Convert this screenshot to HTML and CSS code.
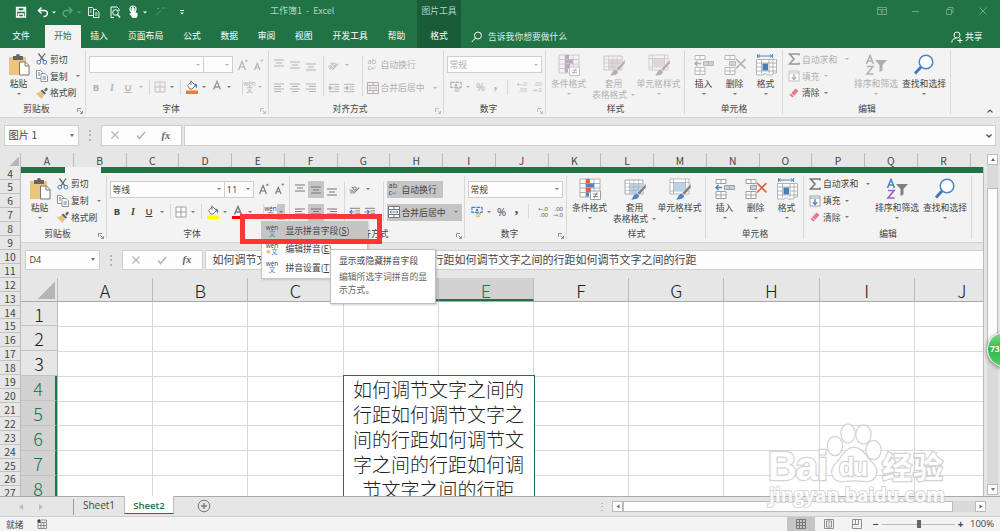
FILE: index.html
```html
<!DOCTYPE html>
<html lang="zh-CN">
<head>
  <meta charset="UTF-8">
  <meta name="viewport" content="width=device-width, initial-scale=1.0">
  <title>工作簿1 - Excel</title>
  <link rel="stylesheet" href="styles.css">
</head>
<body>
  <!-- icon set shared by both ribbons -->
  <svg class="defs">
    <symbol id="paste" viewBox="0 0 22 22"><path d="M1 3h17v18H1z" fill="#ecc47c"/><path d="M5 2h3a2 2 0 0 1 4 0h3v4H5z" fill="#666"/><path d="M11.500 8h6l3.500 3.500V21h-9.500z" fill="#fff" stroke="#777"/><path d="M17 8v4h4" fill="none" stroke="#777"/></symbol>
    <symbol id="cut" viewBox="0 0 12 12"><path d="M2.500 0.500 8 8M9 0.500 3.800 8" stroke="#666" stroke-width="1.300" fill="none"/><circle cx="2.800" cy="9.200" r="1.900" fill="none" stroke="#4a7ebb"/><circle cx="8.900" cy="9.200" r="1.900" fill="none" stroke="#4a7ebb"/></symbol>
    <symbol id="copy" viewBox="0 0 12 12"><path d="M.5.500h4l2 2v6h-6z" fill="#fff" stroke="#888" stroke-width=".9"/><path d="M5 3.500h4l2.500 2.500v5.500H5z" fill="#fff" stroke="#888" stroke-width=".9"/><path d="M2 3h2M2 5h2M6.500 7h3.500M6.500 9h3.500" stroke="#4a7ebb"/></symbol>
    <symbol id="brush" viewBox="0 0 12 12"><path d="M0 6.500 4.500 4.500 8 8l-2.500 4z" fill="#ecc07c"/><path d="M4.500 4 6.300 2.500 10 6.200 8.500 7.800zM8 3 10.300.5 12 2 9.800 4.800z" fill="#666"/></symbol>
    <symbol id="grow" viewBox="0 0 12 12"><path d="M1.500 11 5 2.500 8.500 11M2.700 8h4.600" fill="none" stroke="currentColor" stroke-width="1.200"/><path d="M7.500 2.500 9.300.5l1.800 2z" fill="var(--blue)"/></symbol>
    <symbol id="shrink" viewBox="0 0 12 12"><path d="M1.500 11 4.300 4.500 7.100 11M2.500 8.800h3.600" fill="none" stroke="currentColor" stroke-width="1.100"/><path d="M7 .8h3.600L8.800 2.800z" fill="var(--blue)"/></symbol>
    <symbol id="borders" viewBox="0 0 12 12"><path d="M1 1h10v10H1zM6 1v10M1 6h10" fill="var(--fill)" stroke="var(--line)"/></symbol>
    <symbol id="bucket" viewBox="0 0 14 14"><path d="M2.500 5.500 6.500 1.500l4 4-3.500 3.500H5z" fill="#fff" stroke="#777"/><path d="M6 5V.500" stroke="#777"/><path d="M9.500 3.500c3 .5 3 2 2.500 5-1-1-1-2-2.500-3z" fill="#4a7ebb"/><path d="M1 10.500h12V14H1z" fill="var(--bucket)"/></symbol>
    <symbol id="color" viewBox="0 0 14 14"><path d="M3.500 9.500 7 1.500l3.500 8M4.700 7h4.600" fill="none" stroke="currentColor" stroke-width="1.400"/><path d="M1 11h12v3H1z" fill="var(--bar)"/></symbol>
    <symbol id="top" viewBox="0 0 12 12"><path d="M1 1.500h10M3 4.500h6M1 7.500h10" stroke="currentColor"/></symbol>
    <symbol id="middle" viewBox="0 0 12 12"><path d="M1 3.500h10M3 6.500h6M1 9.500h10" stroke="currentColor"/></symbol>
    <symbol id="bottom" viewBox="0 0 12 12"><path d="M1 5.500h10M3 8.500h6M1 11.500h10" stroke="currentColor"/></symbol>
    <symbol id="left" viewBox="0 0 12 12"><path d="M1 2.500h10M1 5h7M1 7.500h10M1 10h7" stroke="currentColor"/></symbol>
    <symbol id="center" viewBox="0 0 12 12"><path d="M1 2.500h10M3 5h6M1 7.500h10M3 10h6" stroke="currentColor"/></symbol>
    <symbol id="right" viewBox="0 0 12 12"><path d="M1 2.500h10M4 5h7M1 7.500h10M4 10h7" stroke="currentColor"/></symbol>
    <symbol id="outdent" viewBox="0 0 13 12"><path d="M1 2h11M7 4.700h5M7 7.300h5M1 10h11" stroke="currentColor"/><path d="M1 6h5M3.200 3.800 1 6l2.200 2.200" fill="none" stroke="var(--blue)" stroke-width="1.300"/></symbol>
    <symbol id="indent" viewBox="0 0 13 12"><path d="M1 2h11M7 4.700h5M7 7.300h5M1 10h11" stroke="currentColor"/><path d="M.5 6h5M3.500 3.800 5.700 6 3.500 8.200" fill="none" stroke="var(--blue)" stroke-width="1.300"/></symbol>
    <symbol id="merge" viewBox="0 0 12 12"><path d="M.5.500h11v11H.500zM.5 3.500h11M.5 8.500h11M6 .5v3M6 8.500v3" fill="var(--fill)" stroke="currentColor"/><path d="M2 6h8M3.500 4.800 2 6l1.500 1.200M8.500 4.800 10 6 8.500 7.200" fill="none" stroke="var(--blue)" stroke-width=".9"/></symbol>
    <symbol id="money" viewBox="0 0 13 12"><path d="M1 1h11v5.500H1z" fill="none" stroke="var(--blue)" stroke-width="1.300" stroke-dasharray="4 1"/><circle cx="6.500" cy="3.800" r="1.400" fill="var(--blue)"/><path d="M5 8h6M5 10.500h5" stroke="var(--gold)" stroke-width="1.800"/></symbol>
    <symbol id="cond" viewBox="0 0 22 22"><path d="M1 1h20v18H1zM1 5.500h20M1 10h20M1 14.500h20M7 1v18M15 1v18" fill="var(--fill)" stroke="var(--line)" stroke-width=".8"/><path d="M7 1h4v4H7zM7 10h5v4H7z" fill="var(--red)"/><path d="M7 5.500h8v4H7zM7 14.500h3v4H7z" fill="var(--blue)"/><path d="M11.500 13h10v8.500h-10z" fill="#fff" stroke="var(--line)"/><path d="M14 16.200h5M14 18.500h5M18 14.500l-3 5.500" stroke="currentColor" fill="none" stroke-width=".9"/></symbol>
    <symbol id="table" viewBox="0 0 22 22"><path d="M1 2h18v14H1z" fill="var(--fill)" stroke="var(--line)" stroke-width=".9"/><path d="M5.500 5.500h13V16h-13z" fill="var(--tint)"/><path d="M1 5.500h18M1 9h18M1 12.500h18M5.500 2v14M10 2v14M14.500 2v14" stroke="var(--line)" stroke-width=".5"/><path d="M22 5.500v4l-6.500 7.500-2.500-2z" fill="var(--dark)" stroke="#f3f3f3" stroke-width=".6"/><path d="M12.500 15.500l2.500 2c0 3-3 4-8 4 2-1 2-5 5.500-6z" fill="var(--blue)"/></symbol>
    <symbol id="cell" viewBox="0 0 22 22"><path d="M1 1h19v15H1zM1 4.500h19M1 13h19M4.500 1v15M16.500 1v15" fill="var(--fill)" stroke="var(--line)" stroke-width=".7"/><path d="M5 5h11v8H5z" fill="var(--tint)"/><path d="M22 5.500v4l-6.500 7.500-2.500-2z" fill="var(--dark)" stroke="#f3f3f3" stroke-width=".6"/><path d="M12.500 15.500l2.500 2c0 3-3 4-8 4 2-1 2-5 5.500-6z" fill="var(--blue)"/></symbol>
    <symbol id="insert" viewBox="0 0 22 22"><path d="M2 1.500h10v4H2zM7 1.500v4M2 13.500h10v7H2zM7 13.500v7M2 17h10" fill="#fff" stroke="var(--line)"/><path d="M10.500 7.500h10v4h-10zM15.500 7.500v4" fill="var(--tint)" stroke="var(--line)"/><path d="M2 9.500h6M4.500 7 2 9.500 4.500 12" fill="none" stroke="var(--blue)" stroke-width="1.400"/></symbol>
    <symbol id="delete" viewBox="0 0 22 22"><path d="M1 1.500h10v4H1zM6 1.500v4M1 13.500h10v7H1zM6 13.500v7M1 17h10" fill="#fff" stroke="var(--line)"/><path d="M5.500 7.500h6v4h-6z" fill="var(--tint)" stroke="var(--line)"/><path d="M12 5l9.500 9.500M21.500 5 12 14.500" stroke="var(--red)" stroke-width="1.700"/></symbol>
    <symbol id="format" viewBox="0 0 22 22"><path d="M2.500 0v4M17.500 0v4M3 2h14M5 .5 3.200 2 5 3.500M15 .5 16.800 2 15 3.500" fill="none" stroke="#4a7ebb" stroke-width=".9"/><path d="M1.500 5.500h20v13.500h-3l-1 2h-5l-2-1.500-3 1.500h-6zM1.500 9h20M1.500 17h20M6.500 5.500v14M14 5.500v14M18 5.500v14M1.500 13h5M14 13h7" fill="#fff" stroke="#999" stroke-width=".7"/><path d="M7.500 9.500h5.500v7H7.500z" fill="#4a7ebb"/></symbol>
    <symbol id="sum" viewBox="0 0 12 12"><path d="M11 2.500V1H1.500L6 6l-4.500 5H11V9.500" fill="none" stroke="currentColor" stroke-width="1.600"/></symbol>
    <symbol id="fill" viewBox="0 0 12 12"><path d="M1 1h10v10H1zM1 3h10" fill="#fff" stroke="var(--line)"/><path d="M6 4v5.500M3.800 7.300 6 9.500l2.200-2.200" fill="none" stroke="var(--blue)" stroke-width="1.400"/></symbol>
    <symbol id="eraser" viewBox="0 0 12 12"><path d="M1.500 8 7.500 1.500 10.500 4 4.500 10.500z" fill="#e8788c"/><path d="M3 6.300l3 2.600" stroke="#fff" stroke-width=".7"/></symbol>
    <symbol id="sort" viewBox="0 0 22 22"><path d="M1.500 10 5 1.500 8.500 10M2.800 7h4.500" fill="none" stroke="var(--blue)" stroke-width="1.600"/><path d="M2 12.500h6L2 20h6.500" fill="none" stroke="var(--purple)" stroke-width="1.600"/><path d="M10 6h12l-4.500 5v5.500L14.500 18v-7z" fill="var(--dark)"/></symbol>
    <symbol id="find" viewBox="0 0 22 22"><circle cx="13" cy="8" r="6.800" fill="#fff" stroke="#4a86c5" stroke-width="1.500"/><path d="M8 13 2 19.500" stroke="#4077b5" stroke-width="2.800"/></symbol>
    <symbol id="launch" viewBox="0 0 6 6"><path d="M.5 4V.500H4M2.500 2.500 5 5M5.500 3v2.500H3" fill="none" stroke="currentColor" stroke-width=".8"/></symbol>
    <symbol id="angle" viewBox="0 0 14 12"><text x="0" y="9" font-size="8" font-family="Open Sans" font-weight="600" transform="rotate(-40 5 7)" fill="currentColor">ab</text><path d="M5 11.500 12 4.500" stroke="currentColor" stroke-width="1.200"/></symbol>
  </svg>

  <header class="titlebar">
    <svg class="quick" viewBox="0 0 190 25" fill="none" stroke="#fff">
      <path d="M16.500 7.500h9v9.500h-9zM18 7.500v3.500h6V7.500M18.500 17v-3h5v3" stroke-width="1.300"/>
      <path d="M41.500 7.500 38.500 10.500l3 3M38.500 10.500h6c4 0 4 6-1 6" stroke-width="1.500"/>
      <path d="M52 11.500h4l-2 2z" fill="#fff" stroke="none"/>
      <g opacity=".3"><path d="M69 7.500l3 3-3 3M72 10.500h-6c-4 0-4 6 1 6" stroke-width="1.500"/><path d="M77 11.500h4l-2 2z" fill="#fff" stroke="none"/></g>
      <path d="M88.500 7.500h4l1 1v7h-5zM93.500 9.500h3l2.500 2.500v5.500H93.500zM95 13h2.500M95 15h2.500M90 10h1.500M90 12h1.500" stroke-width=".9"/>
      <path d="M111 7h6l2 2v2M111 7v10.500h3"/><circle cx="115.500" cy="12.500" r="2.800"/><path d="M117.500 14.500l2.500 3" stroke-width="1.400"/>
      <path d="M131.500 12V8.500a1.500 1.500 0 0 1 3 0V12l3 1v3l-1 2h-4l-3-4z" fill="#fff" stroke="none"/><circle cx="133" cy="9" r="3" stroke-width="1.200"/>
      <path d="M143 11.500h4l-2 2z" fill="#fff" stroke="none"/>
      <path d="M156 15.500l5-5M157 8.500h2M162 8h3" opacity=".3"/>
      <path d="M180 10.500h4" /><path d="M180 12.500h4l-2 2z" fill="#fff" stroke="none"/>
    </svg>
    <div class="title">工作簿1&nbsp; -&nbsp; Excel</div>
    <div class="context">图片工具</div>
    <svg class="window" viewBox="0 0 120 25" fill="none" stroke="#71a487"><path d="M1.500 7.500h9v7h-9zM1.500 9.500h9M6 14v-3.500M4.500 12 6 10.500 7.500 12M36 11.500h7M70.500 9.500h5v5h-5zM72 9.500v-2h5v5h-2M103.500 7.500l7 7M110.500 7.500l-7 7"/></svg>
  </header>

  <nav class="tabs">
    <a class="file">文件</a>
    <a class="active">开始</a>
    <a>插入</a>
    <a class="wide">页面布局</a>
    <a>公式</a>
    <a>数据</a>
    <a>审阅</a>
    <a>视图</a>
    <a class="wide">开发工具</a>
    <a>帮助</a>
    <a class="context-tab">格式</a>
    <span class="tell"><svg viewBox="0 0 12 12"><circle cx="7" cy="4.500" r="3.500" fill="none" stroke="#fff"/><path d="M4.500 7 .8 11" stroke="#fff"/></svg>告诉我你想要做什么</span>
    <span class="share"><svg viewBox="0 0 12 12" fill="none" stroke="#fff"><circle cx="6" cy="4" r="3"/><path d="M.8 11.500c0-3 2-4 4-4M9 7v5M6.500 9.500h5"/></svg>共享</span>
  </nav>

  <section class="ribbon">
    <div class="group clipboard">
      <div class="tools">
        <div class="big"><svg><use href="#paste"/></svg><span>粘贴</span><i class="caret"></i></div>
        <div class="stack">
          <div><svg><use href="#cut"/></svg>剪切</div>
          <div><svg><use href="#copy"/></svg>复制<i class="caret"></i></div>
          <div><svg><use href="#brush"/></svg>格式刷</div>
        </div>
      </div>
      <div class="label"><span>剪贴板</span><svg><use href="#launch"/></svg></div>
    </div>
    <div class="group font off">
      <div class="tools">
        <div class="font-top">
          <div class="combo family"><i class="caret"></i></div>
          <div class="combo size"><i class="caret"></i></div>
          <svg><use href="#grow"/></svg><svg><use href="#shrink"/></svg>
        </div>
        <div class="font-row">
          <b>B</b><em>I</em><u>U</u><i class="caret"></i><s></s>
          <svg><use href="#borders"/></svg><i class="caret dark"></i><s></s>
          <svg class="paint"><use href="#bucket"/></svg><i class="caret dark"></i>
          <svg class="paint"><use href="#color"/></svg><i class="caret dark"></i><s></s>
          <span class="wen">wén<br>文</span><i class="caret"></i>
        </div>
      </div>
      <div class="label"><span>字体</span><svg><use href="#launch"/></svg></div>
    </div>
    <div class="group align off">
      <div class="tools">
        <div class="aligns">
          <svg><use href="#top"/></svg><svg><use href="#middle"/></svg><svg><use href="#bottom"/></svg>
          <svg><use href="#left"/></svg><svg><use href="#center"/></svg><svg><use href="#right"/></svg>
        </div>
        <div class="indents">
          <svg><use href="#angle"/></svg><i class="caret"></i>
          <svg><use href="#outdent"/></svg><svg><use href="#indent"/></svg>
        </div>
        <div class="wraps">
          <div class="wrap"><span class="ab">ab<br>c<q>↵</q></span>自动换行</div>
          <div class="merge"><svg><use href="#merge"/></svg>合并后居中<i class="caret"></i></div>
        </div>
      </div>
      <div class="label"><span>对齐方式</span><svg><use href="#launch"/></svg></div>
    </div>
    <div class="group number off">
      <div class="tools">
        <div class="combo">常规<i class="caret"></i></div>
        <div class="number-row">
          <svg><use href="#money"/></svg><i class="caret"></i><span class="pct">%</span><span class="comma">,</span><s></s>
          <span class="dec"><q>←</q>.0<br>.00</span><span class="dec">.00<br><q>→</q>.0</span>
        </div>
      </div>
      <div class="label"><span>数字</span><svg><use href="#launch"/></svg></div>
    </div>
    <div class="group styles off">
      <div class="tools">
        <div class="big"><svg><use href="#cond"/></svg><span>条件格式</span><i class="caret"></i></div>
        <div class="big"><svg><use href="#table"/></svg><span>套用</span><span>表格格式<i class="caret"></i></span></div>
        <div class="big"><svg><use href="#cell"/></svg><span>单元格样式</span><i class="caret"></i></div>
      </div>
      <div class="label"><span>样式</span></div>
    </div>
    <div class="group cells">
      <div class="tools">
        <div class="big gray"><svg><use href="#insert"/></svg><span>插入</span><i class="caret"></i></div>
        <div class="big gray"><svg><use href="#delete"/></svg><span>删除</span><i class="caret"></i></div>
        <div class="big"><svg><use href="#format"/></svg><span>格式</span><i class="caret"></i></div>
      </div>
      <div class="label"><span>单元格</span></div>
    </div>
    <div class="group edit">
      <div class="tools">
        <div class="stack">
          <div class="off sum"><svg><use href="#sum"/></svg>自动求和<i class="caret far"></i></div>
          <div class="off"><svg><use href="#fill"/></svg>填充<i class="caret"></i></div>
          <div><svg><use href="#eraser"/></svg>清除<i class="caret"></i></div>
        </div>
        <div class="big off"><svg><use href="#sort"/></svg><span>排序和筛选</span><i class="caret"></i></div>
        <div class="big"><svg><use href="#find"/></svg><span>查找和选择</span><i class="caret"></i></div>
      </div>
      <div class="label"><span>编辑</span></div>
    </div>
    <svg class="collapse" viewBox="0 0 8 6"><path d="M1.500 4.500 4 2l2.500 2.500" fill="none" stroke="#555" stroke-width="1.200"/></svg>
  </section>

  <section class="formula">
    <div class="name">图片 1<i class="caret"></i></div>
    <div class="dots">⋮</div>
    <div class="fx"><svg viewBox="0 0 10 10"><path d="M1.500 1.500l7 7M8.500 1.500l-7 7" stroke="#b5b5b5" stroke-width="1.200"/></svg><svg viewBox="0 0 10 10"><path d="M1 5.500 3.500 8.500 9 2" fill="none" stroke="#b5b5b5" stroke-width="1.600"/></svg><em>fx</em></div>
    <div class="value"><svg viewBox="0 0 8 6"><path d="M1.500 1.500 4 4l2.500-2.500" fill="none" stroke="#555" stroke-width="1.500"/></svg></div>
  </section>

  <main class="sheet">
    <div class="outer">
      <div class="cols">
        <span class="corner"></span><span>A</span><span>B</span><span>C</span><span>D</span><span>E</span><span>F</span><span>G</span><span>H</span><span>I</span><span>J</span><span>K</span><span>L</span><span>M</span><span>N</span><span>O</span><span>P</span><span>Q</span><span>R</span>
      </div>
      <div class="body">
        <div class="rows">
          <span>4</span><span>5</span><span>6</span><span>7</span><span>8</span><span>9</span><span>10</span><span>11</span><span>12</span><span>13</span><span>14</span><span>15</span><span>16</span><span>17</span><span>18</span><span>19</span><span>20</span><span>21</span><span>22</span><span>23</span><span>24</span><span>25</span><span>26</span><span>27</span>
        </div>

        <!-- picture placed on the sheet -->
        <div class="picture">
          <div class="strip"><span></span></div>
          <section class="ribbon">
            <div class="group clipboard">
              <div class="tools">
                <div class="big"><svg><use href="#paste"/></svg><span>粘贴</span><i class="caret"></i></div>
                <div class="stack">
                  <div><svg><use href="#cut"/></svg>剪切</div>
                  <div><svg><use href="#copy"/></svg>复制<i class="caret"></i></div>
                  <div><svg><use href="#brush"/></svg>格式刷</div>
                </div>
              </div>
              <div class="label"><span>剪贴板</span><svg><use href="#launch"/></svg></div>
            </div>
            <div class="group font">
              <div class="tools">
                <div class="font-top">
                  <div class="combo family">等线<i class="caret"></i></div>
                  <div class="combo size">11<i class="caret"></i></div>
                  <svg><use href="#grow"/></svg><svg><use href="#shrink"/></svg>
                </div>
                <div class="font-row">
                  <b>B</b><em>I</em><u>U</u><i class="caret"></i><s></s>
                  <svg><use href="#borders"/></svg><i class="caret"></i><s></s>
                  <svg class="paint"><use href="#bucket"/></svg><i class="caret"></i>
                  <svg class="paint"><use href="#color"/></svg><i class="caret"></i><s></s>
                  <span class="wen">wén<br>文</span><span class="pressed"><i class="caret"></i></span>
                </div>
              </div>
              <div class="label"><span>字体</span></div>
            </div>
            <div class="group align">
              <div class="tools">
                <div class="aligns">
                  <svg><use href="#top"/></svg><svg class="on"><use href="#middle"/></svg><svg><use href="#bottom"/></svg>
                  <svg><use href="#left"/></svg><svg class="on"><use href="#center"/></svg><svg><use href="#right"/></svg>
                </div>
                <div class="indents">
                  <svg><use href="#angle"/></svg><i class="caret"></i>
                  <svg><use href="#outdent"/></svg><svg><use href="#indent"/></svg>
                </div>
                <div class="wraps">
                  <div class="wrap on"><span class="ab">ab<br>c<q>↵</q></span>自动换行</div>
                  <div class="merge on"><svg><use href="#merge"/></svg>合并后居中<i class="caret"></i></div>
                </div>
              </div>
              <div class="label"><span>对齐方式</span><svg><use href="#launch"/></svg></div>
            </div>
            <div class="group number">
              <div class="tools">
                <div class="combo">常规<i class="caret"></i></div>
                <div class="number-row">
                  <svg><use href="#money"/></svg><i class="caret"></i><span class="pct">%</span><span class="comma">,</span><s></s>
                  <span class="dec"><q>←</q>.0<br>.00</span><span class="dec">.00<br><q>→</q>.0</span>
                </div>
              </div>
              <div class="label"><span>数字</span><svg><use href="#launch"/></svg></div>
            </div>
            <div class="group styles">
              <div class="tools">
                <div class="big"><svg><use href="#cond"/></svg><span>条件格式</span><i class="caret"></i></div>
                <div class="big"><svg><use href="#table"/></svg><span>套用</span><span>表格格式<i class="caret"></i></span></div>
                <div class="big"><svg><use href="#cell"/></svg><span>单元格样式</span><i class="caret"></i></div>
              </div>
              <div class="label"><span>样式</span></div>
            </div>
            <div class="group cells">
              <div class="tools">
                <div class="big"><svg><use href="#insert"/></svg><span>插入</span><i class="caret"></i></div>
                <div class="big"><svg><use href="#delete"/></svg><span>删除</span><i class="caret"></i></div>
                <div class="big"><svg><use href="#format"/></svg><span>格式</span><i class="caret"></i></div>
              </div>
              <div class="label"><span>单元格</span></div>
            </div>
            <div class="group edit">
              <div class="tools">
                <div class="stack">
                  <div><svg><use href="#sum"/></svg>自动求和<i class="caret far"></i></div>
                  <div><svg><use href="#fill"/></svg>填充<i class="caret"></i></div>
                  <div><svg><use href="#eraser"/></svg>清除<i class="caret"></i></div>
                </div>
                <div class="big"><svg><use href="#sort"/></svg><span>排序和筛选</span><i class="caret"></i></div>
                <div class="big"><svg><use href="#find"/></svg><span>查找和选择</span><i class="caret"></i></div>
              </div>
              <div class="label"><span>编辑</span></div>
            </div>
          </section>

          <section class="formula">
            <div class="name small">D4<i class="caret"></i></div>
            <div class="dots">⋮</div>
            <div class="fx"><svg viewBox="0 0 10 10"><path d="M1.500 1.500l7 7M8.500 1.500l-7 7" stroke="#b5b5b5" stroke-width="1.200"/></svg><svg viewBox="0 0 10 10"><path d="M1 5.500 3.500 8.500 9 2" fill="none" stroke="#b5b5b5" stroke-width="1.600"/></svg><em>fx</em></div>
            <div class="value">如何调节文字之间的行距如何调节文字之间的行距如何调节文字之间的行距如何调节文字之间的行距</div>
          </section>

          <div class="cols big-cols">
            <span class="corner"></span><span>A</span><span>B</span><span>C</span><span class="sel">D</span><span class="sel">E</span><span>F</span><span>G</span><span>H</span><span>I</span><span>J</span>
          </div>
          <div class="grid">
            <div class="rows big-rows">
              <span>1</span><span>2</span><span>3</span><span class="sel">4</span><span class="sel">5</span><span class="sel">6</span><span class="sel">7</span><span class="sel">8</span>
            </div>
            <div class="cells-area">
              <div class="merged">如何调节文字之间的行距如何调节文字之间的行距如何调节文字之间的行距如何调节文字之间的行距</div>
            </div>
          </div>

          <div class="menu">
            <div class="hover"><span class="wen">wén<br>文</span>显示拼音字段(<u>S</u>)</div>
            <div><span class="wen star">wén<br><small>✹</small>文</span>编辑拼音(<u>E</u>)...</div>
            <div><span class="wen">wén<br>文</span>拼音设置(<u>T</u>)...</div>
          </div>
          <div class="tooltip">
            <strong>显示或隐藏拼音字段</strong>
            <p>编辑所选字词拼音的显示方式。</p>
          </div>
          <div class="highlight"></div>
        </div>
      </div>
    </div>
    <div class="vscroll">
      <span class="btn"><i class="up"></i></span>
      <span class="thumb"></span>
      <span class="btn"><i class="caret"></i></span>
    </div>
    <div class="badge">73</div>
  </main>

  <footer class="sheet-tabs">
    <div class="arrows"><i></i><i></i></div>
    <a>Sheet1</a>
    <a class="active">Sheet2</a>
    <svg class="add" viewBox="0 0 14 14" fill="none" stroke="#777"><circle cx="7" cy="7" r="5.800"/><path d="M4 7h6M7 4v6" stroke-width="1.300"/></svg>
    <div class="dots">⋮</div>
    <div class="hscroll">
      <span class="btn"><i class="prev"></i></span>
      <span class="thumb"></span>
      <span class="btn"><i class="next"></i></span>
    </div>
  </footer>

  <div class="status">
    <span class="ready">就绪</span>
    <svg class="macro" viewBox="0 0 10 10"><path d="M1 3.500h8.500V9.500H1zM1 6.500h8.500M4 3.500v6M6.800 3.500v6M4 1h5.500v2" fill="none" stroke="#777" stroke-width=".8"/><circle cx="2" cy="2" r="1.700" fill="#444"/></svg>
    <div class="views">
      <span class="on"><svg viewBox="0 0 10 10"><path d="M.5.500h9v9h-9zM.5 3.500h9M.5 6.500h9M3.500.500v9M6.500.500v9" fill="none" stroke="#777"/></svg></span>
      <span><svg viewBox="0 0 10 10"><path d="M.5.500h9v9h-9zM2.500 2h5v6h-5zM4 4h2M4 6h2" fill="none" stroke="#777" stroke-width=".8"/></svg></span>
      <span><svg viewBox="0 0 10 10"><path d="M.5.500h9v9h-9zM.5 5.500h6v-5M3.500.500v5" fill="none" stroke="#777" stroke-width=".8"/></svg></span>
    </div>
    <div class="zoom"><b>−</b><div class="track"><span></span></div><b>+</b></div>
    <span class="percent">100%</span>
  </div>

  <div class="watermark">
    <svg viewBox="0 0 184 90">
      <text x="2" y="58" font-size="40" font-family="Liberation Sans" textLength="60">Bai</text>
      <ellipse cx="69" cy="24" rx="7" ry="9"/><ellipse cx="82" cy="11.500" rx="6.500" ry="9"/><ellipse cx="97.500" cy="12.500" rx="7" ry="9"/><ellipse cx="107.500" cy="28" rx="7" ry="9"/>
      <path d="M88 26c-9 0-12 10-17 15-9 8-4 19 6 18 8-1 15-1 22 0 11 1 15-10 7-18-6-5-9-15-18-15z"/>
      <text x="73" y="54" font-size="25" font-family="Liberation Sans" textLength="29">du</text>
      <text x="116" y="56" font-size="30" font-family="Noto Sans CJK SC" textLength="61">经验</text>
      <text class="url" x="3" y="80" font-size="19" font-family="Open Sans" textLength="176">jingyan.baidu.com</text>
    </svg>
  </div>
</body>
</html>
```
FILE: styles.css
```css
* {
  box-sizing: border-box;
}
body {
  margin: 0;
  width: 1000px;
  height: 531px;
  overflow: hidden;
  display: flex;
  flex-direction: column;
  position: relative;
  background: #e6e6e6;
  color: #444;
  font-family: "Noto Sans CJK SC", sans-serif;
  font-size: 8.8px;
  line-height: 11px;
  white-space: nowrap;
  --blue: #4a86c5;
  --gold: #ecc47c;
  --red: #dd6546;
  --purple: #9a5fc0;
  --tint: #bcd2ea;
  --fill: #fff;
  --line: #a0a0a0;
  --dark: #808080;
  --bucket: #ff0;
  --bar: #f00;
}
.defs {
  position: absolute;
  width: 0;
  height: 0;
}
svg {
  display: block;
  width: 12px;
  height: 12px;
  flex: none;
}
.caret {
  display: inline-block;
  border: 2px solid transparent;
  border-top: 2.500px solid #777;
  border-bottom: 0;
  flex: none;
}
.off .caret {
  border-top-color: #b5b5b5;
}

/* title bar and tabs */
.titlebar {
  height: 25px;
  background: #217346;
  display: flex;
  flex: none;
  color: #b5d2c2;
  line-height: 21px;
}
.quick {
  width: 190px;
  height: 25px;
}
.title {
  width: 227px;
  padding-left: 80px;
  font-size: 9px;
}
.context {
  width: 44px;
  text-align: center;
  background: #1b5c38;
}
.window {
  width: 120px;
  height: 25px;
  margin-left: 415px;
}
.tabs {
  height: 23px;
  background: #217346;
  color: #fff;
  display: flex;
  flex: none;
  line-height: 22px;
}
.tabs a {
  width: 37.200px;
  text-align: center;
}
.tabs .file {
  width: 45px;
  padding-right: 3px;
}
.tabs .active {
  width: 35.500px;
  background: #f3f3f3;
  color: #217346;
}
.tabs .wide {
  width: 55.800px;
}
.tabs .context-tab {
  width: 44px;
  margin-left: auto;
  background: #1b5c38;
}
.tell {
  width: 490px;
  padding-left: 10px;
  display: flex;
  align-items: center;
  gap: 5px;
  color: #dcebe3;
}
.share {
  width: 49px;
  display: flex;
  align-items: center;
  gap: 2px;
}

/* ribbon */
.ribbon {
  height: 70px;
  display: flex;
  flex: none;
  background: #f3f3f3;
  border-bottom: 1px solid #d2d2d2;
  position: relative;
}
.group {
  display: flex;
  flex-direction: column;
  background: linear-gradient(#d8d8d8, #d8d8d8) right 3px / 1px 63px no-repeat;
  flex: none;
}
.tools {
  height: 55px;
  display: flex;
}
.tools svg {
  color: #777;
}
.label {
  display: flex;
  line-height: 12px;
  text-align: center;
  color: #444;
}
.label span {
  flex: 1;
}
.label svg {
  width: 6px;
  height: 6px;
  margin: 5px 3px 0 4px;
  color: #777;
}
.off {
  color: #b1b1b1;
  --blue: #b5b0b5;
  --gold: #d0cdd0;
  --red: #b5b0b5;
  --purple: #b5b0b5;
  --tint: #dcd8dc;
  --fill: #f6f0f6;
  --line: #c6bfc6;
  --dark: #b1adb1;
  --bucket: #ed7d31;
  --bar: transparent;
}
.off svg {
  color: #b1b1b1;
}
.off.sum svg {
  color: #999;
}
.gray {
  --blue: #b0b0b0;
  --red: #b5b0b5;
  --tint: #d3cfd3;
  --line: #bdb5bd;
}
.big {
  display: flex;
  flex-direction: column;
  align-items: center;
  padding-top: 5.500px;
}
.big svg {
  width: 22px;
  height: 22px;
  margin-bottom: 2px;
}
.big > .caret {
  margin-top: 4px;
}
.big span .caret {
  margin: 0 0 2px 4px;
}
.stack {
  padding-top: 3px;
}
.stack div {
  height: 16.800px;
  display: flex;
  align-items: center;
  gap: 2px;
}
.stack .caret {
  margin-left: 2px;
}
.stack .far {
  margin-left: 6px;
}
.clipboard {
  width: 86px;
}
.clipboard .big {
  width: 36px;
  padding-left: 1px;
}
.clipboard .stack .caret {
  margin-left: 6px;
}
.font {
  width: 183px;
}
.font .tools {
  flex-direction: column;
  padding: 8px 0 0 2.500px;
}
.font-top {
  display: flex;
  height: 17px;
  align-items: center;
}
.combo {
  height: 17px;
  background: #fdfdfd;
  border: 1px solid #cfcfcf;
  display: flex;
  justify-content: space-between;
  align-items: center;
  padding: 0 3px 0 2px;
}
.combo .caret {
  margin-left: auto;
}
.family {
  width: 115px;
}
.size {
  width: 30px;
  margin-left: -1px;
  font: 9.500px/15px "Open Sans", sans-serif;
}
.font-top svg {
  margin-left: 4px;
}
.font-row {
  display: grid;
  grid-template-columns: 16px 16px 16px 9px 8px 14px 10px 7px 16px 8px 18px 5px 12px 13px 8px;
  place-items: center;
  height: 28px;
  margin-left: -0.500px;
  font-family: "Open Sans", sans-serif;
  font-size: 9.500px;
}
.font-row em {
  font-family: "Liberation Serif", serif;
  font-weight: bold;
  font-size: 10px;
}
.font-row u {
  font-weight: 600;
}
s {
  width: 1px;
  height: 15px;
  background: #d8d8d8;
}
.font-row s:nth-of-type(3) {
  justify-self: end;
}
.font-row .dark {
  border-top-color: #777;
}
.paint {
  width: 14px;
  height: 14px;
}
.off .paint {
  color: #999;
}
.pressed {
  width: 8px;
  height: 16px;
  background: #c5c5c5;
  display: flex;
  align-items: center;
  justify-content: center;
}
.wen {
  font: 6.500px/6px "Open Sans", "Noto Sans CJK SC", sans-serif;
  text-align: center;
}
.align {
  width: 175px;
}
.align .tools {
  padding: 8px 0 0 2px;
}
.aligns {
  display: grid;
  grid-template-columns: 16px 16px 16px;
  grid-template-rows: 17px 17px;
  row-gap: 6px;
  width: 52.500px;
  height: 40px;
  border-right: 1px solid #d8d8d8;
}
.aligns svg {
  width: 16px;
  height: 17px;
  padding: 2px;
}
.indents {
  display: grid;
  grid-template-columns: 15px 15px;
  grid-template-rows: 17px 17px;
  row-gap: 6px;
  padding-left: 4px;
  width: 39px;
  height: 40px;
  align-items: center;
  border-right: 1px solid #d8d8d8;
}
.indents .caret {
  justify-self: start;
  margin-left: 2px;
}
.wraps {
  display: flex;
  flex-direction: column;
  gap: 6px;
  padding-left: 3px;
}
.wraps div {
  display: flex;
  align-items: center;
  height: 17px;
  gap: 2px;
  padding-left: 1px;
}
.wrap {
  width: 56px;
}
.merge {
  width: 75px;
}
.merge .caret {
  margin-left: 6px;
}
.ab {
  width: 12px;
  font: 7.500px/6.500px "Open Sans", sans-serif;
  padding-left: 1px;
}
q {
  quotes: none;
  color: var(--blue);
  font-size: 6px;
}
.on {
  background: #c5c5c5;
}
.number {
  width: 102px;
}
.number .tools {
  flex-direction: column;
  padding: 8px 4px 0 2.500px;
}
.number-row {
  display: grid;
  grid-template-columns: 18px 6px 20px 10px 14px 15px 15px;
  place-items: center;
  height: 28px;
}
.pct {
  font: 11px/12px "Open Sans", sans-serif;
}
.comma {
  font: bold 14px/12px "Liberation Serif", serif;
  padding-bottom: 5px;
}
.dec {
  font: 6px/6px "Open Sans", sans-serif;
  text-align: right;
}
.dec q {
  font-family: "DejaVu Sans", sans-serif;
}
.styles {
  width: 139px;
}
.styles .big {
  width: 45px;
}
.cells {
  width: 98px;
}
.cells .tools {
  padding-left: 3px;
}
.cells .big {
  width: 31px;
}
.edit {
  width: 168px;
}
.edit .stack {
  width: 69px;
  padding-left: 5px;
}
.edit .big {
  width: 48px;
}
.collapse {
  width: 8px;
  height: 6px;
  margin: 60px 0 0 35px;
}

/* formula bar */
.formula {
  height: 35px;
  display: flex;
  flex: none;
  padding: 7px 4px 7.500px 3.500px;
  background: #e6e6e6;
  line-height: 18px;
}
.formula div {
  background: #fdfdfd;
  border: 1px solid #cfcfcf;
}
.formula .name {
  width: 75px;
  padding: 0 4px;
  display: flex;
  align-items: center;
  justify-content: space-between;
  font-size: 10.300px;
}
.formula .small {
  font: 9px/18px "Open Sans", sans-serif;
}
.formula .name .caret, .vscroll .caret {
  border-width: 3px 2.500px 0;
}
.formula .dots {
  width: 22px;
  text-align: center;
  background: none;
  border: 0;
  color: #999;
  font-size: 12px;
}
.formula .fx {
  width: 81px;
  display: flex;
  align-items: center;
  gap: 16px;
  padding-left: 8px;
}
.fx svg {
  width: 10px;
  height: 10px;
}
.fx em {
  font: italic bold 10.500px "Liberation Serif", serif;
  color: #666;
}
.formula .value {
  flex: 1;
  margin-left: 2px;
  padding-left: 7px;
  font-size: 11px;
  line-height: 17px;
}
.value svg {
  width: 8px;
  height: 6px;
  margin: 7px 2px 0 auto;
}

/* sheet */
.sheet {
  height: 343px;
  display: flex;
  flex: none;
  position: relative;
}
.outer {
  width: 984px;
}
.cols {
  display: flex;
  height: 13.500px;
  overflow: hidden;
  font-size: 10.300px;
  line-height: 15px;
}
.cols span {
  width: 52.750px;
  flex: none;
  text-align: center;
  border-right: 1px solid #bbb;
}
.cols .corner {
  width: 21px;
  background: linear-gradient(135deg, transparent 50%, #b5b5b5 50%) 10px 4px / 9px 9px no-repeat;
}
.body {
  display: flex;
  height: 329.500px;
}
.rows {
  width: 21px;
  height: 100%;
  overflow: hidden;
  font-size: 10.300px;
  line-height: 14px;
  border-right: 1px solid #bbb;
}
.rows span {
  display: block;
  height: 13.920px;
  text-align: center;
  border-bottom: 1px solid #c2c2c2;
}
.picture {
  width: 963px;
  height: 329.500px;
  overflow: hidden;
  position: relative;
  border-right: 1px solid #bbb;
}
.strip {
  height: 6px;
  background: #217346;
}
.strip span {
  display: block;
  width: 36px;
  height: 6px;
  margin-left: 44px;
  background: #f3f3f3;
}
.picture .value {
  margin-right: -5px;
}
.picture .group.font .label {
  padding-right: 13px;
}
.big-cols {
  height: 24px;
  font-size: 18px;
  font-weight: 300;
  line-height: 24px;
  color: #222;
  border-bottom: 1px solid #aaa;
}
.big-cols span {
  width: 95.200px;
}
.big-cols .corner {
  width: 37px;
  background: linear-gradient(135deg, transparent 50%, #b5b5b5 50%) 16px 3px / 18px 18px no-repeat;
}
.cols .sel {
  background: #d2d2d2;
  color: #217346;
  border-bottom: 2px solid #217346;
}
.grid {
  display: flex;
  height: 195px;
}
.big-rows {
  width: 37px;
  font-size: 18px;
  font-weight: 300;
  line-height: 25px;
  color: #222;
}
.big-rows span {
  height: 24.900px;
}
.rows .sel {
  background: #d2d2d2;
  color: #217346;
  border-right: 2px solid #217346;
}
.cells-area {
  flex: 1;
  position: relative;
  background:
    repeating-linear-gradient(90deg, transparent 0 94.200px, #d9d9d9 94.200px 95.200px),
    repeating-linear-gradient(#fff 0 23.900px, #d9d9d9 23.900px 24.900px);
}
.merged {
  position: absolute;
  left: 284.500px;
  top: 73.500px;
  width: 192px;
  height: 140px;
  padding: 1px 9px;
  background: #fff;
  border: 1.500px solid #217346;
  color: #222;
  font-size: 19px;
  font-weight: 300;
  line-height: 24.900px;
  text-align: center;
  white-space: normal;
  word-break: break-all;
}

/* phonetic menu */
.menu {
  position: absolute;
  left: 240px;
  top: 54px;
  width: 107px;
  height: 58px;
  background: #fdfdfd;
  border: 1px solid #c6c6c6;
  box-shadow: 1px 1px 2px rgba(0, 0, 0, 0.15);
}
.menu div {
  height: 18.300px;
  display: flex;
  align-items: center;
}
.menu .wen {
  width: 20px;
  margin-right: 3.500px;
}
.menu .wen::first-line {
  color: #444;
}
.menu .wen, .picture .font-row .wen {
  color: #4a86c5;
}
.picture .font-row .wen::first-line {
  color: #444;
}
.menu small {
  color: #ecb96a;
  font-size: 6px;
}
.menu .hover {
  background: #c5c5c5;
}
.tooltip {
  position: absolute;
  left: 309px;
  top: 82px;
  width: 106px;
  height: 55px;
  padding: 5px 8px;
  background: #fff;
  border: 1px solid #bebebe;
  box-shadow: 1px 1px 2px rgba(0, 0, 0, 0.2);
  white-space: normal;
  line-height: 12.500px;
}
.tooltip strong {
  font-weight: 400;
}
.tooltip p {
  margin: 4px 0 0;
  color: #666;
}
.highlight {
  position: absolute;
  left: 219px;
  top: 47px;
  width: 142px;
  height: 30px;
  border: 5px solid #fb3633;
}

/* scrollbars */
.vscroll {
  width: 11px;
  height: 342px;
  margin-left: 3px;
  padding-top: 1px;
  background: linear-gradient(#e6e6e6 1px, #dadada 1px);
  display: flex;
  flex-direction: column;
}
.vscroll .btn {
  height: 11px;
}
.vscroll .thumb {
  height: 165px;
  margin: 23px 0 auto;
}
.btn, .thumb {
  background: #fdfdfd;
  border: 1px solid #bbb;
  display: flex;
  align-items: center;
  justify-content: center;
}
.up, .prev, .next {
  border: 2.500px solid transparent;
  border-bottom: 3px solid #666;
  border-top: 0;
}
.prev {
  transform: rotate(-90deg);
}
.next {
  transform: rotate(90deg);
}
.badge {
  position: absolute;
  left: 987px;
  top: 179px;
  width: 35px;
  height: 35px;
  padding-left: 2px;
  border-radius: 50%;
  border: 1.500px solid #eee;
  background: linear-gradient(#7fdb85, #32b94a 50%, #4fd062);
  box-shadow: 0 1px 4px rgba(0, 0, 0, 0.5);
  color: #fff;
  font: bold 8.500px/32px "Open Sans", sans-serif;
}

/* sheet tabs and status */
.sheet-tabs {
  height: 21px;
  flex: none;
  display: flex;
  border-top: 1px solid #aaa;
  border-bottom: 1px solid #cfcfcf;
  font: 10px/17px "Open Sans", sans-serif;
}
.arrows {
  width: 74px;
  height: 16px;
  margin-top: 2px;
  padding: 5px 0 0 19px;
  display: flex;
  gap: 16px;
  border-right: 1px solid #999;
}
.arrows i {
  width: 4px;
  height: 6px;
  background: #bbb;
  clip-path: polygon(100% 0, 100% 100%, 0 50%);
}
.arrows i + i {
  clip-path: polygon(0 0, 0 100%, 100% 50%);
}
.sheet-tabs a {
  width: 50px;
  text-align: center;
}
.sheet-tabs .active {
  height: 18px;
  margin-top: -1px;
  background: #fff;
  border: 1px solid #bbb;
  border-width: 0 1px;
  border-bottom: 1.500px solid #217346;
  color: #217346;
  font-weight: 600;
  font-size: 9.600px;
  line-height: 19px;
}
.add {
  width: 14px;
  height: 14px;
  margin: 2px 0 0 23px;
}
.sheet-tabs .dots {
  margin-left: 386px;
  width: 6px;
  color: #999;
  line-height: 19px;
}
.hscroll {
  width: 374px;
  height: 11px;
  margin: 4px 0 0 9px;
  display: flex;
  background: #dadada;
}
.hscroll .btn {
  width: 11px;
}
.hscroll .thumb {
  width: 330px;
  margin-right: auto;
}
.status {
  height: 14px;
  flex: none;
  display: flex;
  align-items: center;
  background: #f3f3f3;
}
.ready {
  width: 37px;
  padding-left: 6px;
}
.macro {
  width: 10px;
  height: 10px;
}
.views {
  display: flex;
  margin-left: 740px;
}
.views span {
  width: 28px;
  height: 14px;
  display: flex;
  align-items: center;
  justify-content: center;
}
.views svg {
  width: 10px;
  height: 10px;
}
.zoom {
  width: 97px;
  display: flex;
  align-items: center;
  gap: 3px;
  font: 10px/14px "Open Sans", sans-serif;
  margin-left: 2px;
}
.track {
  width: 73px;
  height: 1px;
  background: #bbb;
}
.track span {
  display: block;
  width: 4px;
  height: 8px;
  margin: -4px 0 0 35px;
  background: #666;
}
.percent {
  font: 9.500px/14px "Open Sans", sans-serif;
}

.watermark {
  position: absolute;
  left: 766px;
  top: 422px;
  opacity: 0.85;
}
.watermark svg {
  width: 184px;
  height: 90px;
  fill: #fff;
  stroke: #cdcdcd;
  stroke-width: 2.500px;
  paint-order: stroke;
  font-weight: 700;
}
.watermark .url {
  stroke-width: 1.800px;
}
```
